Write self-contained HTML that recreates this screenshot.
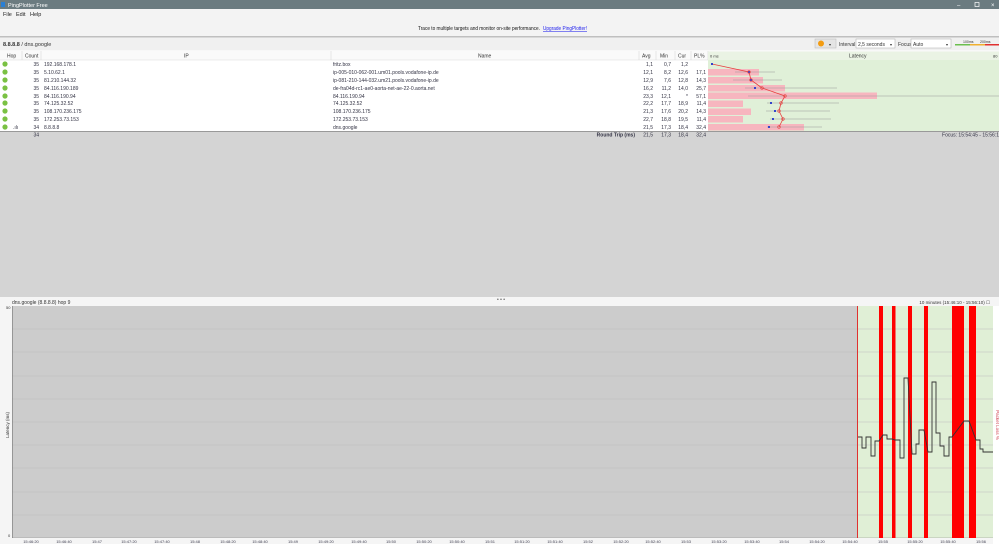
<!DOCTYPE html>
<html><head><meta charset="utf-8"><style>
body{margin:0;width:999px;height:544px;overflow:hidden;background:#fff;font-family:"Liberation Sans",sans-serif}
svg text{font-family:"Liberation Sans",sans-serif}
</style></head><body>
<svg width="999" height="544" viewBox="0 0 999 544" xmlns="http://www.w3.org/2000/svg">
<rect x="0" y="0" width="999" height="9" fill="#6b7b80"/>
<rect x="1" y="2" width="4" height="5" fill="#2a7fd4"/>
<text x="8" y="7" font-size="5.5" fill="#fff">PingPlotter Free</text>
<text x="957" y="7" font-size="6" fill="#fff">–</text>
<rect x="975" y="2.5" width="4" height="4" fill="none" stroke="#fff" stroke-width="0.7"/>
<text x="991" y="7" font-size="6" fill="#fff">×</text>
<rect x="0" y="9" width="999" height="10" fill="#f3f3f3"/>
<text x="3" y="16" font-size="5.5" fill="#222">File</text>
<text x="16" y="16" font-size="5.5" fill="#222">Edit</text>
<text x="30" y="16" font-size="5.5" fill="#222">Help</text>
<rect x="0" y="19" width="999" height="17" fill="#f3f3f3"/>
<text x="418" y="30" font-size="5.5" fill="#111" textLength="122" lengthAdjust="spacingAndGlyphs">Trace to multiple targets and monitor on-site performance.</text>
<text x="543" y="30" font-size="5.5" fill="#2222ee" text-decoration="underline" textLength="44" lengthAdjust="spacingAndGlyphs">Upgrade PingPlotter!</text>
<rect x="0" y="36" width="999" height="1.5" fill="#bfbfbf"/>
<rect x="0" y="37.5" width="999" height="13" fill="#f0f0f0"/>
<text x="3" y="46" font-size="5.5" fill="#333"><tspan font-weight="bold">8.8.8.8</tspan> / dns.google</text>
<rect x="815" y="39" width="21" height="9" fill="#e4e4e4" stroke="#b8b8b8" stroke-width="0.5"/>
<circle cx="821" cy="43.5" r="3" fill="#f39c12"/>
<text x="829" y="46" font-size="4" fill="#333">▾</text>
<text x="839" y="46" font-size="5" fill="#333">Interval</text>
<rect x="856" y="39" width="39" height="9" fill="#fff" stroke="#aaa" stroke-width="0.5"/>
<text x="858" y="46" font-size="5" fill="#333">2,5 seconds</text>
<text x="890" y="46" font-size="4" fill="#333">▾</text>
<text x="898" y="46" font-size="5" fill="#333">Focus</text>
<rect x="911" y="39" width="40" height="9" fill="#fff" stroke="#aaa" stroke-width="0.5"/>
<text x="913" y="46" font-size="5" fill="#333">Auto</text>
<text x="946" y="46" font-size="4" fill="#333">▾</text>
<text x="963" y="43" font-size="3.5" fill="#333">100ms</text><text x="980" y="43" font-size="3.5" fill="#333">200ms</text>
<rect x="955" y="44" width="15" height="1.5" fill="#6bbf4e"/><rect x="970" y="44" width="15" height="1.5" fill="#f0b030"/><rect x="985" y="44" width="14" height="1.5" fill="#e03030"/>
<rect x="0" y="51" width="999" height="9" fill="#fafafa"/>
<line x1="0" y1="60" x2="999" y2="60" stroke="#ddd" stroke-width="0.5"/>
<g stroke="#d0d0d0" stroke-width="0.5">
<line x1="22" y1="51" x2="22" y2="60"/><line x1="41" y1="51" x2="41" y2="60"/><line x1="331" y1="51" x2="331" y2="60"/><line x1="639" y1="51" x2="639" y2="60"/><line x1="656" y1="51" x2="656" y2="60"/><line x1="675" y1="51" x2="675" y2="60"/><line x1="691" y1="51" x2="691" y2="60"/><line x1="708" y1="51" x2="708" y2="60"/></g>
<g font-size="5" fill="#333">
<text x="7" y="57.5">Hop</text><text x="25" y="57.5">Count</text><text x="184" y="57.5">IP</text><text x="478" y="57.5">Name</text>
<text x="642" y="57.5">Avg</text><text x="660" y="57.5">Min</text><text x="678" y="57.5">Cur</text><text x="694" y="57.5">PL%</text>
</g>
<rect x="708" y="51.5" width="291" height="8.5" fill="#eaf3e4"/>
<text x="710" y="57.5" font-size="4" fill="#333">0 ms</text><text x="849" y="57.5" font-size="5" fill="#333">Latency</text><text x="993" y="57.5" font-size="4" fill="#333">80</text>
<rect x="708" y="60" width="291" height="71" fill="#e0f0d8"/>
<g font-size="5" fill="#334">
<g><circle cx="5" cy="64" r="2.6" fill="#7ac143"/><text x="39" y="66" text-anchor="end">35</text><text x="44" y="66">192.168.178.1</text><text x="333" y="66">fritz.box</text><text x="653" y="66" text-anchor="end">1,1</text><text x="671" y="66" text-anchor="end">0,7</text><text x="688" y="66" text-anchor="end">1,2</text></g>
<g><circle cx="5" cy="72" r="2.6" fill="#7ac143"/><text x="39" y="74" text-anchor="end">35</text><text x="44" y="74">5.10.62.1</text><text x="333" y="74">ip-005-010-062-001.um01.pools.vodafone-ip.de</text><text x="653" y="74" text-anchor="end">12,1</text><text x="671" y="74" text-anchor="end">8,2</text><text x="688" y="74" text-anchor="end">12,6</text><text x="706" y="74" text-anchor="end">17,1</text></g>
<g><circle cx="5" cy="80" r="2.6" fill="#7ac143"/><text x="39" y="82" text-anchor="end">35</text><text x="44" y="82">81.210.144.32</text><text x="333" y="82">ip-081-210-144-032.um21.pools.vodafone-ip.de</text><text x="653" y="82" text-anchor="end">12,9</text><text x="671" y="82" text-anchor="end">7,6</text><text x="688" y="82" text-anchor="end">12,8</text><text x="706" y="82" text-anchor="end">14,3</text></g>
<g><circle cx="5" cy="88" r="2.6" fill="#7ac143"/><text x="39" y="90" text-anchor="end">35</text><text x="44" y="90">84.116.190.189</text><text x="333" y="90">de-fra04d-rc1-ae0-aorta-net-ae-22-0.aorta.net</text><text x="653" y="90" text-anchor="end">16,2</text><text x="671" y="90" text-anchor="end">11,2</text><text x="688" y="90" text-anchor="end">14,0</text><text x="706" y="90" text-anchor="end">25,7</text></g>
<g><circle cx="5" cy="96" r="2.6" fill="#7ac143"/><text x="39" y="98" text-anchor="end">35</text><text x="44" y="98">84.116.190.94</text><text x="333" y="98">84.116.190.94</text><text x="653" y="98" text-anchor="end">23,3</text><text x="671" y="98" text-anchor="end">12,1</text><text x="688" y="98" text-anchor="end">*</text><text x="706" y="98" text-anchor="end">57,1</text></g>
<g><circle cx="5" cy="103" r="2.6" fill="#7ac143"/><text x="39" y="105" text-anchor="end">35</text><text x="44" y="105">74.125.32.52</text><text x="333" y="105">74.125.32.52</text><text x="653" y="105" text-anchor="end">22,2</text><text x="671" y="105" text-anchor="end">17,7</text><text x="688" y="105" text-anchor="end">18,9</text><text x="706" y="105" text-anchor="end">11,4</text></g>
<g><circle cx="5" cy="111" r="2.6" fill="#7ac143"/><text x="39" y="113" text-anchor="end">35</text><text x="44" y="113">108.170.236.175</text><text x="333" y="113">108.170.236.175</text><text x="653" y="113" text-anchor="end">21,3</text><text x="671" y="113" text-anchor="end">17,6</text><text x="688" y="113" text-anchor="end">20,2</text><text x="706" y="113" text-anchor="end">14,3</text></g>
<g><circle cx="5" cy="119" r="2.6" fill="#7ac143"/><text x="39" y="121" text-anchor="end">35</text><text x="44" y="121">172.253.73.153</text><text x="333" y="121">172.253.73.153</text><text x="653" y="121" text-anchor="end">22,7</text><text x="671" y="121" text-anchor="end">18,8</text><text x="688" y="121" text-anchor="end">19,5</text><text x="706" y="121" text-anchor="end">11,4</text></g>
<g><circle cx="5" cy="127" r="2.6" fill="#7ac143"/><text x="13" y="129">.ılı</text><text x="39" y="129" text-anchor="end">34</text><text x="44" y="129">8.8.8.8</text><text x="333" y="129">dns.google</text><text x="653" y="129" text-anchor="end">21,5</text><text x="671" y="129" text-anchor="end">17,3</text><text x="688" y="129" text-anchor="end">18,4</text><text x="706" y="129" text-anchor="end">32,4</text></g>
</g>
<g fill="#f7b6bf">
<rect x="708" y="69" width="51" height="6.5"/><rect x="708" y="77" width="55" height="6.5"/><rect x="708" y="85" width="77" height="6.5"/><rect x="708" y="92.5" width="169" height="6.5"/><rect x="708" y="100.5" width="35" height="6.5"/><rect x="708" y="108.5" width="43" height="6.5"/><rect x="708" y="116" width="35" height="6.5"/><rect x="708" y="124" width="96" height="6.5"/>
</g>
<g stroke="#999" stroke-width="0.6">
<line x1="735" y1="72" x2="775" y2="72"/><line x1="733" y1="80" x2="782" y2="80"/><line x1="745" y1="88" x2="837" y2="88"/><line x1="748" y1="96" x2="999" y2="96"/><line x1="767" y1="103" x2="839" y2="103"/><line x1="766" y1="111" x2="830" y2="111"/><line x1="770" y1="119" x2="831" y2="119"/><line x1="767" y1="127" x2="822" y2="127"/>
</g>
<polyline points="712,64 749,72 751,80 762,88 785,96 781,103 779,111 783,119 779,127" fill="none" stroke="#e84040" stroke-width="0.8"/>
<g fill="#3344cc"><rect x="711" y="63" width="2" height="2"/><rect x="748" y="71" width="2" height="2"/><rect x="750" y="79" width="2" height="2"/><rect x="754" y="87" width="2" height="2"/><rect x="770" y="102" width="2" height="2"/><rect x="774" y="110" width="2" height="2"/><rect x="772" y="118" width="2" height="2"/><rect x="768" y="126" width="2" height="2"/></g>
<g fill="none" stroke="#e84040" stroke-width="0.6"><circle cx="749" cy="72" r="1.3"/><circle cx="751" cy="80" r="1.3"/><circle cx="762" cy="88" r="1.3"/><circle cx="785" cy="96" r="1.3"/><circle cx="781" cy="103" r="1.3"/><circle cx="779" cy="111" r="1.3"/><circle cx="783" cy="119" r="1.3"/><circle cx="779" cy="127" r="1.3"/></g>
<rect x="0" y="131" width="999" height="1" fill="#999"/>
<rect x="0" y="132" width="999" height="165" fill="#d4d4d4"/>
<g font-size="5" fill="#334"><text x="39" y="136.5" text-anchor="end">34</text><text x="635" y="136.5" text-anchor="end" font-weight="bold">Round Trip (ms)</text><text x="653" y="136.5" text-anchor="end">21,5</text><text x="671" y="136.5" text-anchor="end">17,3</text><text x="688" y="136.5" text-anchor="end">18,4</text><text x="706" y="136.5" text-anchor="end">32,4</text><text x="999" y="136.5" text-anchor="end">Focus: 15:54:45 - 15:56:1</text></g>
<rect x="0" y="297" width="999" height="9" fill="#f5f5f5"/>
<text x="497" y="301" font-size="5" fill="#555">• • •</text>
<text x="12" y="304" font-size="5" fill="#333">dns.google (8.8.8.8) hop 9</text>
<text x="990" y="304" font-size="4.5" fill="#333" text-anchor="end">10 minutes (15:46:10 - 15:56:10) ☐</text>
<rect x="0" y="306" width="12" height="238" fill="#f5f5f5"/>
<text x="6" y="309" font-size="4" fill="#333">50</text><text x="8" y="537" font-size="4" fill="#333">0</text>
<text x="9" y="425" font-size="4.5" fill="#333" transform="rotate(-90 9 425)" text-anchor="middle">Latency (ms)</text>
<rect x="12" y="306" width="846" height="232" fill="#cccccc"/>
<rect x="858" y="306" width="135" height="232" fill="#e0efd6"/>
<rect x="993" y="306" width="6" height="238" fill="#fff"/>
<text x="996" y="425" font-size="4.5" fill="#d04050" transform="rotate(90 996 425)" text-anchor="middle">Packet Loss %</text>
<g stroke="#bdbdbd" stroke-width="0.5">
<line x1="12" y1="329" x2="993" y2="329"/><line x1="12" y1="352" x2="993" y2="352"/><line x1="12" y1="376" x2="993" y2="376"/><line x1="12" y1="399" x2="993" y2="399"/><line x1="12" y1="422" x2="993" y2="422"/><line x1="12" y1="445" x2="993" y2="445"/><line x1="12" y1="468" x2="993" y2="468"/><line x1="12" y1="492" x2="993" y2="492"/><line x1="12" y1="515" x2="993" y2="515"/></g>
<line x1="12.5" y1="306" x2="12.5" y2="538" stroke="#888" stroke-width="0.8"/>
<line x1="12" y1="538" x2="993" y2="538" stroke="#888" stroke-width="0.6"/>
<line x1="857.5" y1="306" x2="857.5" y2="538" stroke="#e03030" stroke-width="1"/>
<g fill="#ff0000"><rect x="879" y="306" width="4" height="232"/><rect x="892" y="306" width="3.5" height="232"/><rect x="908" y="306" width="4" height="232"/><rect x="924" y="306" width="4" height="232"/><rect x="952" y="306" width="12" height="232"/><rect x="969" y="306" width="7" height="232"/></g>
<polyline fill="none" stroke="#333" stroke-width="0.9" points="858,437 862,437 862,448 866,448 866,437 871,437 871,456 875,456 875,441 879,441 883,435 887,435 887,439 892,439 895,440 900,440 900,458 904,458 904,378 908,378 912,454 916,454 916,444 919,444 919,430 924,430 928,452 932,452 932,382 936,382 936,433 940,433 940,446 944,446 944,456 949,456 949,437 952,437 964,421 969,421 976,440 980,440 980,449 983,449 983,452 993,452"/>
<rect x="0" y="538" width="993" height="6" fill="#f5f5f5"/>
<g font-size="4" fill="#445" text-anchor="middle">
<text x="31" y="543">15:46:20</text><text x="64" y="543">15:46:40</text><text x="97" y="543">15:47</text><text x="129" y="543">15:47:20</text><text x="162" y="543">15:47:40</text><text x="195" y="543">15:48</text><text x="228" y="543">15:48:20</text><text x="260" y="543">15:48:40</text><text x="293" y="543">15:49</text><text x="326" y="543">15:49:20</text><text x="359" y="543">15:49:40</text><text x="391" y="543">15:50</text><text x="424" y="543">15:50:20</text><text x="457" y="543">15:50:40</text><text x="490" y="543">15:51</text><text x="522" y="543">15:51:20</text><text x="555" y="543">15:51:40</text><text x="588" y="543">15:52</text><text x="621" y="543">15:52:20</text><text x="653" y="543">15:52:40</text><text x="686" y="543">15:53</text><text x="719" y="543">15:53:20</text><text x="752" y="543">15:53:40</text><text x="784" y="543">15:54</text><text x="817" y="543">15:54:20</text><text x="850" y="543">15:54:40</text><text x="883" y="543">15:55</text><text x="915" y="543">15:55:20</text><text x="948" y="543">15:55:40</text><text x="981" y="543">15:56</text>
</g>
</svg>
</body></html>
